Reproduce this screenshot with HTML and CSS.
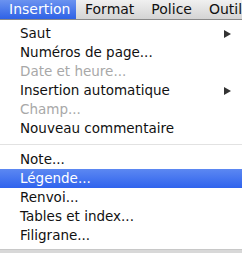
FILE: index.html
```html
<!DOCTYPE html>
<html>
<head>
    <title>Insertion</title>
    <link rel="stylesheet" href="styles.css">
</head>
<body>
    <div class="menubar">
        <span class="menu-title active">Insertion</span>
        <span class="menu-title">Format</span>
        <span class="menu-title">Police</span>
        <span class="menu-title">Outil</span>
    </div>
    <div class="menu">
        <div class="item">Saut<span class="arrow"></span></div>
        <div class="item">Numéros de page...</div>
        <div class="item disabled">Date et heure...</div>
        <div class="item">Insertion automatique<span class="arrow"></span></div>
        <div class="item disabled">Champ...</div>
        <div class="item">Nouveau commentaire</div>
        <div class="separator"></div>
        <div class="item">Note...</div>
        <div class="item selected">Légende...</div>
        <div class="item">Renvoi...</div>
        <div class="item">Tables et index...</div>
        <div class="item">Filigrane...</div>
    </div>
</body>
</html>
```

FILE: styles.css
```css
body {
    margin: 0;
    width: 242px;
    height: 253px;
    overflow: hidden;
    background: #d8d8d8;
    font-family: "DejaVu Sans", sans-serif;
    font-size: 13.5px;
}
.menubar {
    display: flex;
    height: 20px;
    background: linear-gradient(#f0f0f0, #d4d4d4);
    border-bottom: 1px solid #8a8a8a;
    box-sizing: border-box;
    white-space: nowrap;
    font-size: 14px;
}
.menu-title {
    padding: 0 8px 0 9px;
    line-height: 19px;
    color: #111;
}
.menu-title.active {
    background: linear-gradient(#6b93f0, #2f62e6);
    color: white;
    width: 59px;
}
.menu {
    background: white;
    padding: 4px 0 5px;
    height: 230px;
    box-sizing: border-box;
    border-bottom: 1px solid #c8c8c8;
}
.item {
    position: relative;
    height: 19px;
    line-height: 19px;
    padding-left: 20px;
    color: #111;
}
.item.disabled {
    color: #a8a8a8;
}
.item.selected {
    background: linear-gradient(#5c88f2, #2f63ed);
    color: white;
}
.arrow {
    position: absolute;
    right: 11px;
    top: 6px;
    border-left: 7px solid #333;
    border-top: 4px solid transparent;
    border-bottom: 4px solid transparent;
}
.separator {
    height: 1px;
    background: #e2e2e2;
    margin: 6px 0 5px;
}
```
